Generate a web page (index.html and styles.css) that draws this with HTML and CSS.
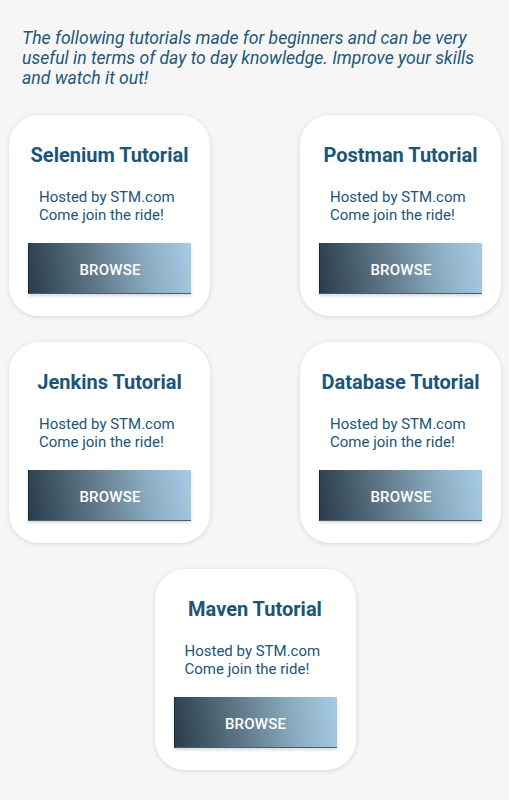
FILE: index.html
```html
<!DOCTYPE html>
<html lang="en">
<head>
<meta charset="utf-8">
<title>Tutorials</title>
<link rel="stylesheet" href="styles.css">
</head>
<body>
<main class="page">
  <p class="intro">The following tutorials made for beginners and can be very useful in terms of day to day knowledge. Improve your skills and watch it out!</p>
  <section class="grid">
    <article class="card">
      <h2 class="card-title">Selenium Tutorial</h2>
      <p class="card-text">Hosted by STM.com<br>Come join the ride!</p>
      <button class="browse">BROWSE</button>
    </article>
    <article class="card">
      <h2 class="card-title">Postman Tutorial</h2>
      <p class="card-text">Hosted by STM.com<br>Come join the ride!</p>
      <button class="browse">BROWSE</button>
    </article>
    <article class="card">
      <h2 class="card-title">Jenkins Tutorial</h2>
      <p class="card-text">Hosted by STM.com<br>Come join the ride!</p>
      <button class="browse">BROWSE</button>
    </article>
    <article class="card">
      <h2 class="card-title">Database Tutorial</h2>
      <p class="card-text">Hosted by STM.com<br>Come join the ride!</p>
      <button class="browse">BROWSE</button>
    </article>
    <article class="card card-center">
      <h2 class="card-title">Maven Tutorial</h2>
      <p class="card-text">Hosted by STM.com<br>Come join the ride!</p>
      <button class="browse">BROWSE</button>
    </article>
  </section>
</main>
</body>
</html>
```
FILE: styles.css
```css
html, body {
  margin: 0;
  padding: 0;
  background: #f6f6f6;
}
body {
  font-family: Roboto, "Liberation Sans", sans-serif;
  color: #1b5577;
}
.page {
  padding: 28px 8px 30px 9px;
}
.intro {
  margin: 0 8px 0 13px;
  font-style: italic;
  font-size: 17.6px;
  line-height: 20px;
  color: #1d587a;
}
.grid {
  margin-top: 27px;
  display: grid;
  grid-template-columns: 201px 201px;
  justify-content: space-between;
  row-gap: 26px;
}
.card {
  width: 201px;
  height: 201px;
  box-sizing: border-box;
  background: #ffffff;
  border-radius: 30px;
  box-shadow: 0 1px 5px rgba(0, 0, 0, 0.13);
  padding-top: 29px;
  display: flex;
  flex-direction: column;
}
.card-center {
  grid-column: 1 / span 2;
  justify-self: center;
}
.card-title {
  margin: 0;
  text-align: center;
  font-size: 20px;
  line-height: 22px;
  font-weight: 700;
  color: #1b5577;
}
.card-text {
  margin: 22px 0 0 30px;
  font-size: 15px;
  line-height: 18px;
  color: #1b5577;
}
.browse {
  margin: 19px auto 0;
  width: 163px;
  height: 51px;
  border: none;
  border-left: 1px solid #1a2a36;
  border-bottom: 1px solid #4a5f6d;
  background: linear-gradient(80deg, #2a3c4a 0%, #5f7888 40%, #8eb0c6 75%, #a6cbe3 100%);
  color: #ffffff;
  font-family: Roboto, "Liberation Sans", sans-serif;
  font-size: 15px;
  font-weight: 500;
  letter-spacing: 0.2px;
  box-shadow: 0 2px 3px rgba(0, 0, 0, 0.15);
  padding: 3px 0 0;
}
```
